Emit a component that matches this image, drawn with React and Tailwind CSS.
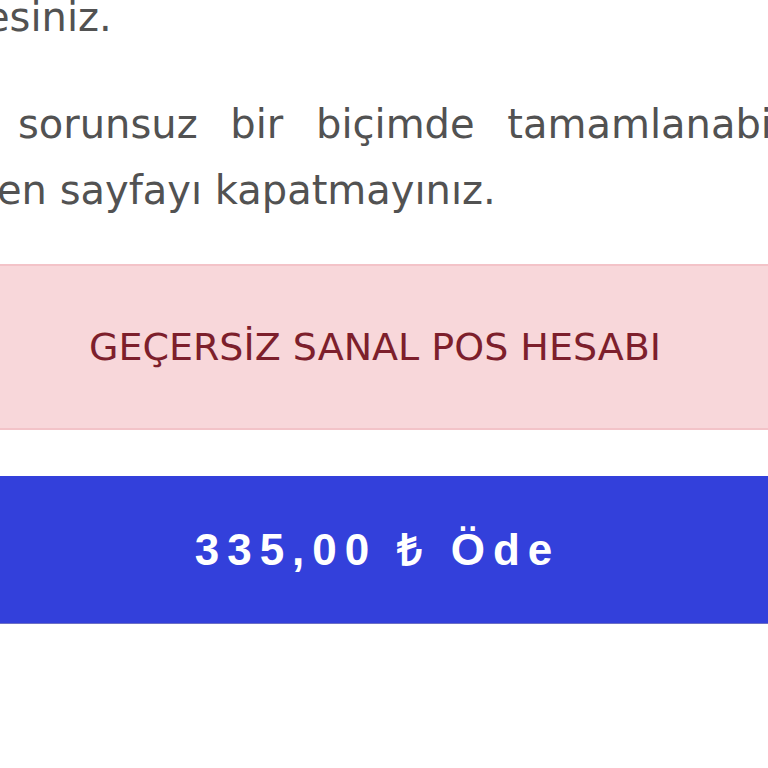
export default function App() {
  return (
    <div className="w-[768px] h-[768px] overflow-hidden bg-white font-['DejaVu_Sans',sans-serif]">
      <div className="-mt-[16px]">
        {/* Info text */}
        <p className="-ml-[15px] whitespace-nowrap text-[40px] leading-[66px] text-[#525252]">esiniz.</p>
        <p className="mt-[41px] whitespace-nowrap text-[40px] leading-[66px] text-[#525252]">
          <span className="block ml-[18px] [word-spacing:20px]">sorunsuz bir biçimde tamamlanabilmesi için</span>
          <span className="block -ml-[3px]">en sayfayı kapatmayınız.</span>
        </p>

        {/* Error alert */}
        <div className="mt-[41px] h-[166px] flex items-center justify-center pr-[18px] border-y-2 border-[#f3c3c8] bg-[#f8d7da] text-[38px] text-[#7d1f2c]">
          GEÇERSİZ SANAL POS HESABI
        </div>

        {/* Pay button */}
        <button className="mt-[46px] w-full h-[148px] flex items-center justify-center pr-[13px] bg-[#3340db] border-b border-[#6d70c4] font-['Liberation_Sans',sans-serif] font-bold text-[44px] tracking-[8px] text-white">
          335,00 ₺ Öde
        </button>
      </div>
    </div>
  );
}
